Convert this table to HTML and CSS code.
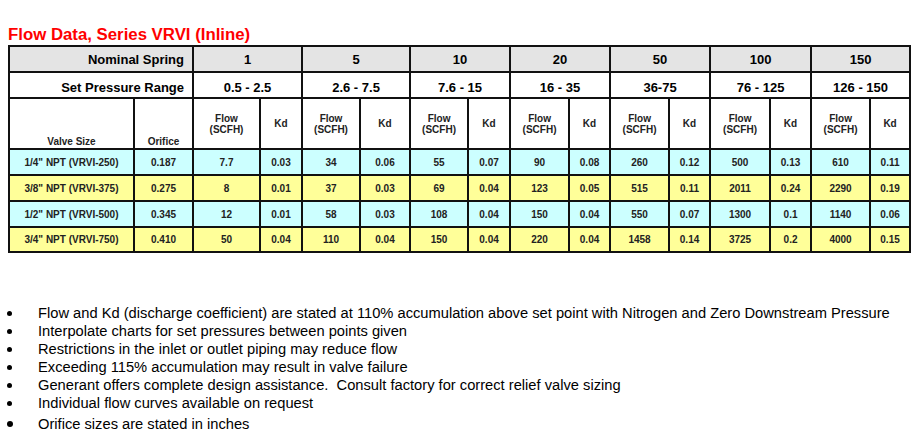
FILE: index.html
```html
<!DOCTYPE html>
<html>
<head>
<meta charset="utf-8">
<link rel="stylesheet" href="styles.css">
</head>
<body>
<div class="page">
  <h1 class="title">Flow Data, Series VRVI (Inline)</h1>
  <table class="flow">
    <colgroup>
      <col class="c-valve"><col class="c-orifice">
      <col class="c67"><col class="c42">
      <col class="c58"><col class="c50">
      <col class="c58"><col class="c42">
      <col class="c59"><col class="c41">
      <col class="c59"><col class="c41">
      <col class="c60"><col class="c41">
      <col class="c59"><col class="c40">
    </colgroup>
    <tr class="r-spring">
      <th colspan="2" class="lbl">Nominal Spring</th>
      <th colspan="2">1</th><th colspan="2">5</th><th colspan="2">10</th><th colspan="2">20</th>
      <th colspan="2">50</th><th colspan="2">100</th><th colspan="2">150</th>
    </tr>
    <tr class="r-range">
      <th colspan="2" class="lbl">Set Pressure Range</th>
      <th colspan="2">0.5 - 2.5</th><th colspan="2">2.6 - 7.5</th><th colspan="2">7.6 - 15</th><th colspan="2">16 - 35</th>
      <th colspan="2">36-75</th><th colspan="2">76 - 125</th><th colspan="2">126 - 150</th>
    </tr>
    <tr class="r-sub">
      <th class="bot">Valve Size</th><th class="bot">Orifice</th>
      <th>Flow<br>(SCFH)</th><th>Kd</th>
      <th>Flow<br>(SCFH)</th><th>Kd</th>
      <th>Flow<br>(SCFH)</th><th>Kd</th>
      <th>Flow<br>(SCFH)</th><th>Kd</th>
      <th>Flow<br>(SCFH)</th><th>Kd</th>
      <th>Flow<br>(SCFH)</th><th>Kd</th>
      <th>Flow<br>(SCFH)</th><th>Kd</th>
    </tr>
    <tr class="r-data cyan">
      <td>1/4" NPT (VRVI-250)</td><td>0.187</td>
      <td>7.7</td><td>0.03</td><td>34</td><td>0.06</td><td>55</td><td>0.07</td><td>90</td><td>0.08</td>
      <td>260</td><td>0.12</td><td>500</td><td>0.13</td><td>610</td><td>0.11</td>
    </tr>
    <tr class="r-data yellow">
      <td>3/8" NPT (VRVI-375)</td><td>0.275</td>
      <td>8</td><td>0.01</td><td>37</td><td>0.03</td><td>69</td><td>0.04</td><td>123</td><td>0.05</td>
      <td>515</td><td>0.11</td><td>2011</td><td>0.24</td><td>2290</td><td>0.19</td>
    </tr>
    <tr class="r-data cyan">
      <td>1/2" NPT (VRVI-500)</td><td>0.345</td>
      <td>12</td><td>0.01</td><td>58</td><td>0.03</td><td>108</td><td>0.04</td><td>150</td><td>0.04</td>
      <td>550</td><td>0.07</td><td>1300</td><td>0.1</td><td>1140</td><td>0.06</td>
    </tr>
    <tr class="r-data yellow last">
      <td>3/4" NPT (VRVI-750)</td><td>0.410</td>
      <td>50</td><td>0.04</td><td>110</td><td>0.04</td><td>150</td><td>0.04</td><td>220</td><td>0.04</td>
      <td>1458</td><td>0.14</td><td>3725</td><td>0.2</td><td>4000</td><td>0.15</td>
    </tr>
  </table>
  <ul class="notes">
    <li>Flow and Kd (discharge coefficient) are stated at 110% accumulation above set point with Nitrogen and Zero Downstream Pressure</li>
    <li>Interpolate charts for set pressures between points given</li>
    <li>Restrictions in the inlet or outlet piping may reduce flow</li>
    <li>Exceeding 115% accumulation may result in valve failure</li>
    <li>Generant offers complete design assistance.&nbsp; Consult factory for correct relief valve sizing</li>
    <li>Individual flow curves available on request</li>
    <li class="gap">Orifice sizes are stated in inches</li>
  </ul>
</div>
</body>
</html>
```

FILE: styles.css
```css
html, body {
  margin: 0;
  padding: 0;
  background: #ffffff;
}
body {
  font-family: "Liberation Sans", Arial, sans-serif;
  color: #000;
}
.page {
  padding: 25px 0 0 8px;
}
.title {
  margin: 0;
  font-size: 16.8px;
  line-height: 19px;
  font-weight: bold;
  color: #ff0000;
  height: 20px;
}
.flow {
  border-collapse: collapse;
  table-layout: fixed;
  width: 902px;
  border: 2px solid #000;
}
.flow th, .flow td {
  border: 2px solid #111;
  padding: 0;
  text-align: center;
  font-weight: bold;
  overflow: hidden;
  white-space: nowrap;
}
.c-valve { width: 125px; }
.c-orifice { width: 59px; }
.c67 { width: 67px; }
.c42 { width: 42px; }
.c58 { width: 58px; }
.c50 { width: 50px; }
.c59 { width: 59px; }
.c41 { width: 41px; }
.c60 { width: 60px; }
.c40 { width: 40px; }

.r-spring { height: 26px; }
.r-spring th {
  background: #e4e4e4;
  font-size: 13px;
  vertical-align: middle;
}
.r-range { height: 26px; }
.r-range th {
  font-size: 13px;
  vertical-align: bottom;
  padding-bottom: 2px;
  background: #fff;
}
.flow th.lbl {
  text-align: right;
  padding-right: 8px;
}
.r-sub { height: 51px; }
.r-sub th {
  font-size: 10px;
  line-height: 11px;
  vertical-align: middle;
  background: #fff;
  color: #222;
}
.r-sub th.bot {
  vertical-align: bottom;
  padding-bottom: 1px;
}
.r-data { height: 26px; }
.r-data.last { height: 25px; }
.r-data td {
  font-size: 10px;
  color: #222;
  vertical-align: middle;
}
.cyan td { background: #ccffff; }
.yellow td { background: #ffff99; }

.notes {
  list-style: none;
  margin: 51px 0 0 0;
  padding: 0;
  font-size: 14.7px;
  line-height: 18px;
}
.notes li {
  position: relative;
  padding-left: 30px;
}
.notes li::before {
  content: "";
  position: absolute;
  left: -1px;
  top: 7px;
  width: 5px;
  height: 5px;
  border-radius: 50%;
  background: #000;
}
.notes li.gap {
  margin-top: 3px;
}
.notes li.gap::before {
  width: 6px;
  height: 6px;
  top: 6px;
}
```
